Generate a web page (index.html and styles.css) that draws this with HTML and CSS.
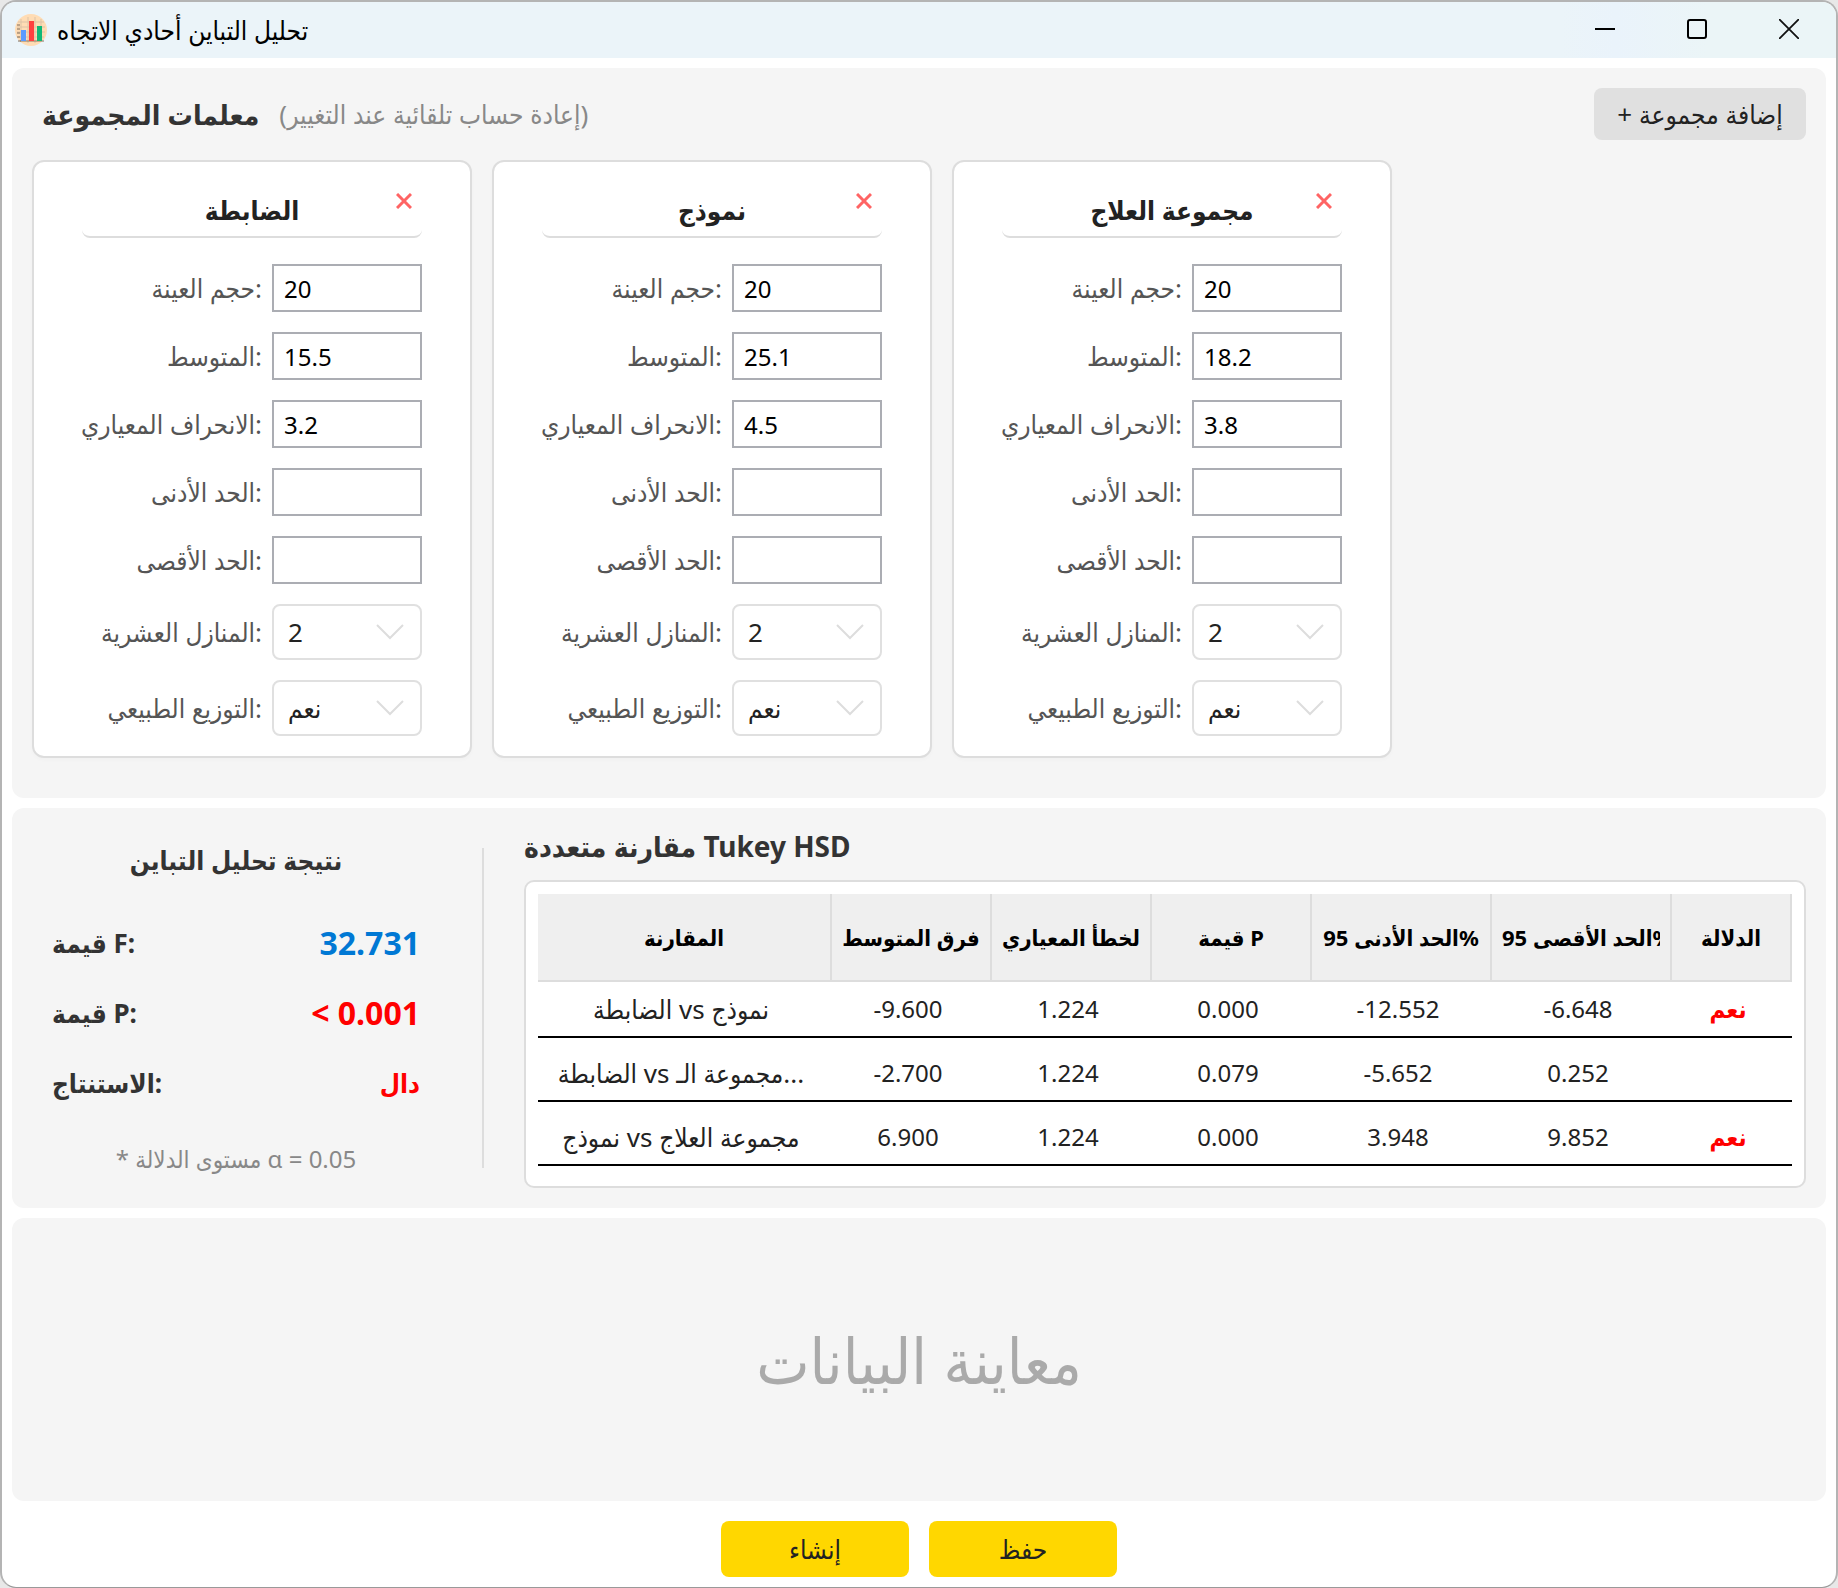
FILE: index.html
```html
<!DOCTYPE html>
<html lang="ar">
<head>
<meta charset="UTF-8">
<meta name="viewport" content="width=device-width, initial-scale=1">
<title>تحليل التباين أحادي الاتجاه</title>
<link rel="stylesheet" href="styles.css">
</head>
<body>
<div class="window">

  <header class="titlebar">
    <svg class="app-icon" width="32" height="32" viewBox="0 0 32 32">
      <circle cx="16" cy="16" r="16" fill="#ffdcb4"/>
      <path d="M3 8h26M2 13h28M2 18h28M3 23h26M6 5v22M13 3v26M20 3v26M26 5v20" stroke="#dcc3a6" stroke-width="1" fill="none"/>
      <path d="M2 11h3M2 15h3M2 19h3M2 23h3M3 27h3" stroke="#7d6a58" stroke-width="1"/>
      <path d="M5 27h24" stroke="#8a7662" stroke-width="1"/>
      <rect x="6" y="16" width="5" height="11" fill="#5b9bff"/>
      <rect x="14" y="7" width="5" height="20" fill="#ff4040"/>
      <rect x="22" y="12" width="5" height="15" fill="#10b878"/>
    </svg>
    <span class="app-name">تحليل التباين أحادي الاتجاه</span>
    <div class="window-buttons">
      <button type="button" aria-label="تصغير"><svg width="20" height="20" viewBox="0 0 20 20"><path d="M0 10h20" stroke="#000" stroke-width="2"/></svg></button>
      <button type="button" aria-label="تكبير"><svg width="20" height="20" viewBox="0 0 20 20"><rect x="1" y="1" width="18" height="18" rx="2" fill="none" stroke="#000" stroke-width="2"/></svg></button>
      <button type="button" aria-label="إغلاق"><svg width="20" height="20" viewBox="0 0 20 20"><path d="M0 0l20 20M20 0L0 20" stroke="#111" stroke-width="1.8"/></svg></button>
    </div>
  </header>

  <main>
    <!-- Group parameters -->
    <section class="panel groups">
      <div class="groups-head">
        <h2>معلمات المجموعة</h2>
        <span class="hint">(إعادة حساب تلقائية عند التغيير)</span>
        <button type="button" class="add">+ إضافة مجموعة</button>
      </div>

      <div class="cards">
        <form class="card">
          <div class="card-title">
            <h3>الضابطة</h3>
            <button type="button" class="remove" aria-label="حذف"><svg width="16" height="16" viewBox="0 0 16 16"><path d="M1 1l14 14M15 1L1 15"/></svg></button>
          </div>
          <div class="field"><label for="n1">حجم العينة:</label><input type="text" id="n1" value="20"></div>
          <div class="field"><label for="mean1">المتوسط:</label><input type="text" id="mean1" value="15.5"></div>
          <div class="field"><label for="sd1">الانحراف المعياري:</label><input type="text" id="sd1" value="3.2"></div>
          <div class="field"><label for="min1">الحد الأدنى:</label><input type="text" id="min1"></div>
          <div class="field"><label for="max1">الحد الأقصى:</label><input type="text" id="max1"></div>
          <div class="field"><label for="dec1">المنازل العشرية:</label>
            <div class="select"><select id="dec1"><option>2</option><option>3</option></select><svg width="28" height="16" viewBox="0 0 28 16"><path d="M1 1l13 13L27 1"/></svg></div>
          </div>
          <div class="field"><label for="norm1">التوزيع الطبيعي:</label>
            <div class="select"><select id="norm1"><option>نعم</option><option>لا</option></select><svg width="28" height="16" viewBox="0 0 28 16"><path d="M1 1l13 13L27 1"/></svg></div>
          </div>
        </form>

        <form class="card">
          <div class="card-title">
            <h3>نموذج</h3>
            <button type="button" class="remove" aria-label="حذف"><svg width="16" height="16" viewBox="0 0 16 16"><path d="M1 1l14 14M15 1L1 15"/></svg></button>
          </div>
          <div class="field"><label for="n2">حجم العينة:</label><input type="text" id="n2" value="20"></div>
          <div class="field"><label for="mean2">المتوسط:</label><input type="text" id="mean2" value="25.1"></div>
          <div class="field"><label for="sd2">الانحراف المعياري:</label><input type="text" id="sd2" value="4.5"></div>
          <div class="field"><label for="min2">الحد الأدنى:</label><input type="text" id="min2"></div>
          <div class="field"><label for="max2">الحد الأقصى:</label><input type="text" id="max2"></div>
          <div class="field"><label for="dec2">المنازل العشرية:</label>
            <div class="select"><select id="dec2"><option>2</option><option>3</option></select><svg width="28" height="16" viewBox="0 0 28 16"><path d="M1 1l13 13L27 1"/></svg></div>
          </div>
          <div class="field"><label for="norm2">التوزيع الطبيعي:</label>
            <div class="select"><select id="norm2"><option>نعم</option><option>لا</option></select><svg width="28" height="16" viewBox="0 0 28 16"><path d="M1 1l13 13L27 1"/></svg></div>
          </div>
        </form>

        <form class="card">
          <div class="card-title">
            <h3>مجموعة العلاج</h3>
            <button type="button" class="remove" aria-label="حذف"><svg width="16" height="16" viewBox="0 0 16 16"><path d="M1 1l14 14M15 1L1 15"/></svg></button>
          </div>
          <div class="field"><label for="n3">حجم العينة:</label><input type="text" id="n3" value="20"></div>
          <div class="field"><label for="mean3">المتوسط:</label><input type="text" id="mean3" value="18.2"></div>
          <div class="field"><label for="sd3">الانحراف المعياري:</label><input type="text" id="sd3" value="3.8"></div>
          <div class="field"><label for="min3">الحد الأدنى:</label><input type="text" id="min3"></div>
          <div class="field"><label for="max3">الحد الأقصى:</label><input type="text" id="max3"></div>
          <div class="field"><label for="dec3">المنازل العشرية:</label>
            <div class="select"><select id="dec3"><option>2</option><option>3</option></select><svg width="28" height="16" viewBox="0 0 28 16"><path d="M1 1l13 13L27 1"/></svg></div>
          </div>
          <div class="field"><label for="norm3">التوزيع الطبيعي:</label>
            <div class="select"><select id="norm3"><option>نعم</option><option>لا</option></select><svg width="28" height="16" viewBox="0 0 28 16"><path d="M1 1l13 13L27 1"/></svg></div>
          </div>
        </form>
      </div>
    </section>

    <!-- Results -->
    <section class="panel results">
      <div class="anova">
        <h3>نتيجة تحليل التباين</h3>
        <div class="stat"><span>قيمة F:</span><b class="blue">32.731</b></div>
        <div class="stat"><span>قيمة P:</span><b class="red">&lt; 0.001</b></div>
        <div class="stat"><span>الاستنتاج:</span><b class="red word">دال</b></div>
        <p class="note">* مستوى الدلالة α = 0.05</p>
      </div>

      <div class="tukey">
        <h3>مقارنة متعددة Tukey HSD</h3>
        <div class="table-box">
          <table>
            <colgroup>
              <col><col class="mid"><col class="mid"><col class="mid"><col class="wide"><col class="wide"><col class="last">
            </colgroup>
            <thead>
              <tr>
                <th><div>المقارنة</div></th>
                <th><div>فرق المتوسط</div></th>
                <th><div>الخطأ المعياري</div></th>
                <th><div>قيمة P</div></th>
                <th><div>الحد الأدنى 95%</div></th>
                <th><div>الحد الأقصى 95%</div></th>
                <th><div>الدلالة</div></th>
              </tr>
            </thead>
            <tbody>
              <tr><td>الضابطة vs نموذج</td><td>-9.600</td><td>1.224</td><td>0.000</td><td>-12.552</td><td>-6.648</td><td class="yes">نعم</td></tr>
              <tr><td>الضابطة vs مجموعة الـ...</td><td>-2.700</td><td>1.224</td><td>0.079</td><td>-5.652</td><td>0.252</td><td></td></tr>
              <tr><td>نموذج vs مجموعة العلاج</td><td>6.900</td><td>1.224</td><td>0.000</td><td>3.948</td><td>9.852</td><td class="yes">نعم</td></tr>
            </tbody>
          </table>
        </div>
      </div>
    </section>

    <!-- Preview -->
    <section class="panel preview">معاينة البيانات</section>
  </main>

  <footer>
    <button type="button">إنشاء</button>
    <button type="button">حفظ</button>
  </footer>
</div>
</body>
</html>
```
FILE: styles.css
```css
* {
  box-sizing: border-box;
}

body {
  margin: 0;
  background: #e8e8e8;
  color: #222;
  font-family: "Noto Sans", "DejaVu Sans Condensed", "DejaVu Sans", sans-serif;
  font-size: 24px;
  line-height: 32px;
}

h2, h3, p {
  margin: 0;
}

button, input, select {
  font: inherit;
  color: inherit;
}

button {
  border: none;
  padding: 0;
  cursor: pointer;
}

svg {
  display: block;
}

.window {
  display: flex;
  flex-direction: column;
  min-height: 100vh;
  background: #fff;
  border: 2px solid #b4b4b4;
  border-bottom: 1px solid #999;
  border-radius: 16px;
  overflow: hidden;
}

/* Title bar */
.titlebar {
  display: flex;
  align-items: center;
  height: 56px;
  padding: 0 1px 0 13px;
  background: linear-gradient(to right, #ebf4f9 85%, #eaf3fb 88%, #ebf5f7 93%);
}

.app-name {
  margin-left: 10px;
  color: #000;
  font-size: 26px;
}

.window-buttons {
  display: flex;
  align-self: flex-start;
  margin-left: auto;
}

.window-buttons button {
  display: flex;
  align-items: center;
  justify-content: center;
  width: 92px;
  height: 54px;
  background: none;
}

/* Panels */
main {
  display: flex;
  flex: 1;
  flex-direction: column;
  gap: 10px;
  padding: 10px 10px 0;
}

.panel {
  background: #f5f5f5;
  border-radius: 12px;
}

.groups {
  padding: 20px 20px 40px;
}

.groups-head {
  display: flex;
  align-items: center;
  gap: 20px;
  margin-bottom: 20px;
  padding-left: 10px;
}

.groups-head h2 {
  color: #333;
  font-size: 28px;
}

.hint {
  color: #888;
  font-size: 26px;
}

.add {
  min-width: 212px;
  height: 52px;
  margin-left: auto;
  padding: 0 20px;
  background: #e0e0e0;
  border-radius: 8px;
  font-size: 26px;
}

/* Group cards */
.cards {
  display: flex;
  gap: 20px;
}

.card {
  display: flex;
  flex-direction: column;
  gap: 20px;
  width: 440px;
  padding: 18px 48px 20px;
  background: #fff;
  border: 2px solid #ddd;
  border-radius: 12px;
  box-shadow: 0 2px 4px rgba(0,0,0,0.02);
}

.card-title {
  position: relative;
  height: 58px;
  margin-bottom: 6px;
  padding-top: 14px;
  border-bottom: 2px solid #ddd;
  border-radius: 8px;
  text-align: center;
}

.card-title h3 {
  font-size: 26px;
}

.remove {
  position: absolute;
  top: 5px;
  right: 2px;
  padding: 8px;
  background: none;
}

.remove path {
  fill: none;
  stroke: #ff6464;
  stroke-width: 3;
}

.field {
  display: flex;
  align-items: center;
  justify-content: flex-end;
  gap: 10px;
}

.field label {
  color: #555;
  font-size: 26px;
  white-space: nowrap;
}

.field input {
  width: 150px;
  height: 48px;
  padding: 0 10px;
  background: #fff;
  border: 2px solid #abadb3;
  color: #000;
}

.select {
  position: relative;
  width: 150px;
}

.select select {
  width: 100%;
  height: 56px;
  padding: 0 14px;
  appearance: none;
  background: #fff;
  border: 2px solid #e0e0e0;
  border-radius: 8px;
  font-size: 26px;
}

.select svg {
  position: absolute;
  top: 20px;
  right: 18px;
  pointer-events: none;
}

.select path {
  fill: none;
  stroke: #ddd;
  stroke-width: 2;
}

/* Results */
.results {
  display: flex;
  padding: 20px 20px 20px 0;
}

.anova {
  display: flex;
  flex-direction: column;
  width: 472px;
  margin: 20px 0;
  padding: 0 62px 0 40px;
  border-right: 2px solid #ddd;
  color: #333;
}

.anova h3 {
  margin: -4px 0 32px;
  font-size: 26px;
  text-align: center;
}

.stat {
  display: flex;
  align-items: center;
  justify-content: space-between;
  height: 70px;
  font-size: 26px;
  font-weight: bold;
}

.stat b {
  font-size: 32px;
  font-weight: bold;
}

.stat .word {
  font-size: 26px;
}

.blue {
  color: #0078d4;
}

.red {
  color: #f00;
}

.note {
  margin-top: 32px;
  color: #888;
  font-size: 24px;
  line-height: 18px;
  text-align: center;
}

.tukey {
  flex: 1;
  min-width: 0;
  padding-left: 40px;
}

.tukey h3 {
  margin: 2px 0 18px;
  color: #333;
  font-size: 28px;
}

.table-box {
  padding: 12px 12px 20px;
  background: #fff;
  border: 2px solid #ddd;
  border-radius: 10px;
}

table {
  width: 100%;
  table-layout: fixed;
  border-collapse: separate;
  border-spacing: 0;
}

.mid {
  width: 160px;
}

.wide {
  width: 180px;
}

.last {
  width: 120px;
}

th {
  height: 88px;
  padding: 0 10px;
  background: #efefef;
  border-right: 2px solid #ddd;
  border-bottom: 2px solid #ddd;
  color: #000;
  font-size: 22px;
}

th div {
  overflow: hidden;
  white-space: nowrap;
}

td {
  height: 64px;
  padding: 8px 8px 0 0;
  border-bottom: 2px solid #000;
  text-align: center;
  white-space: nowrap;
}

tbody tr:first-child td {
  height: 56px;
  padding-top: 0;
}

td:first-child {
  font-size: 26px;
}

.yes {
  color: #f00;
  font-weight: bold;
}

.preview {
  display: flex;
  flex: 1;
  align-items: center;
  justify-content: center;
  min-height: 200px;
  color: #aaa;
  font-size: 63px;
  line-height: 80px;
}

/* Bottom buttons */
footer {
  display: flex;
  justify-content: center;
  gap: 20px;
  padding: 20px 0 10px;
}

footer button {
  width: 188px;
  height: 56px;
  background: #ffd700;
  border-radius: 8px;
  font-size: 26px;
}
```
